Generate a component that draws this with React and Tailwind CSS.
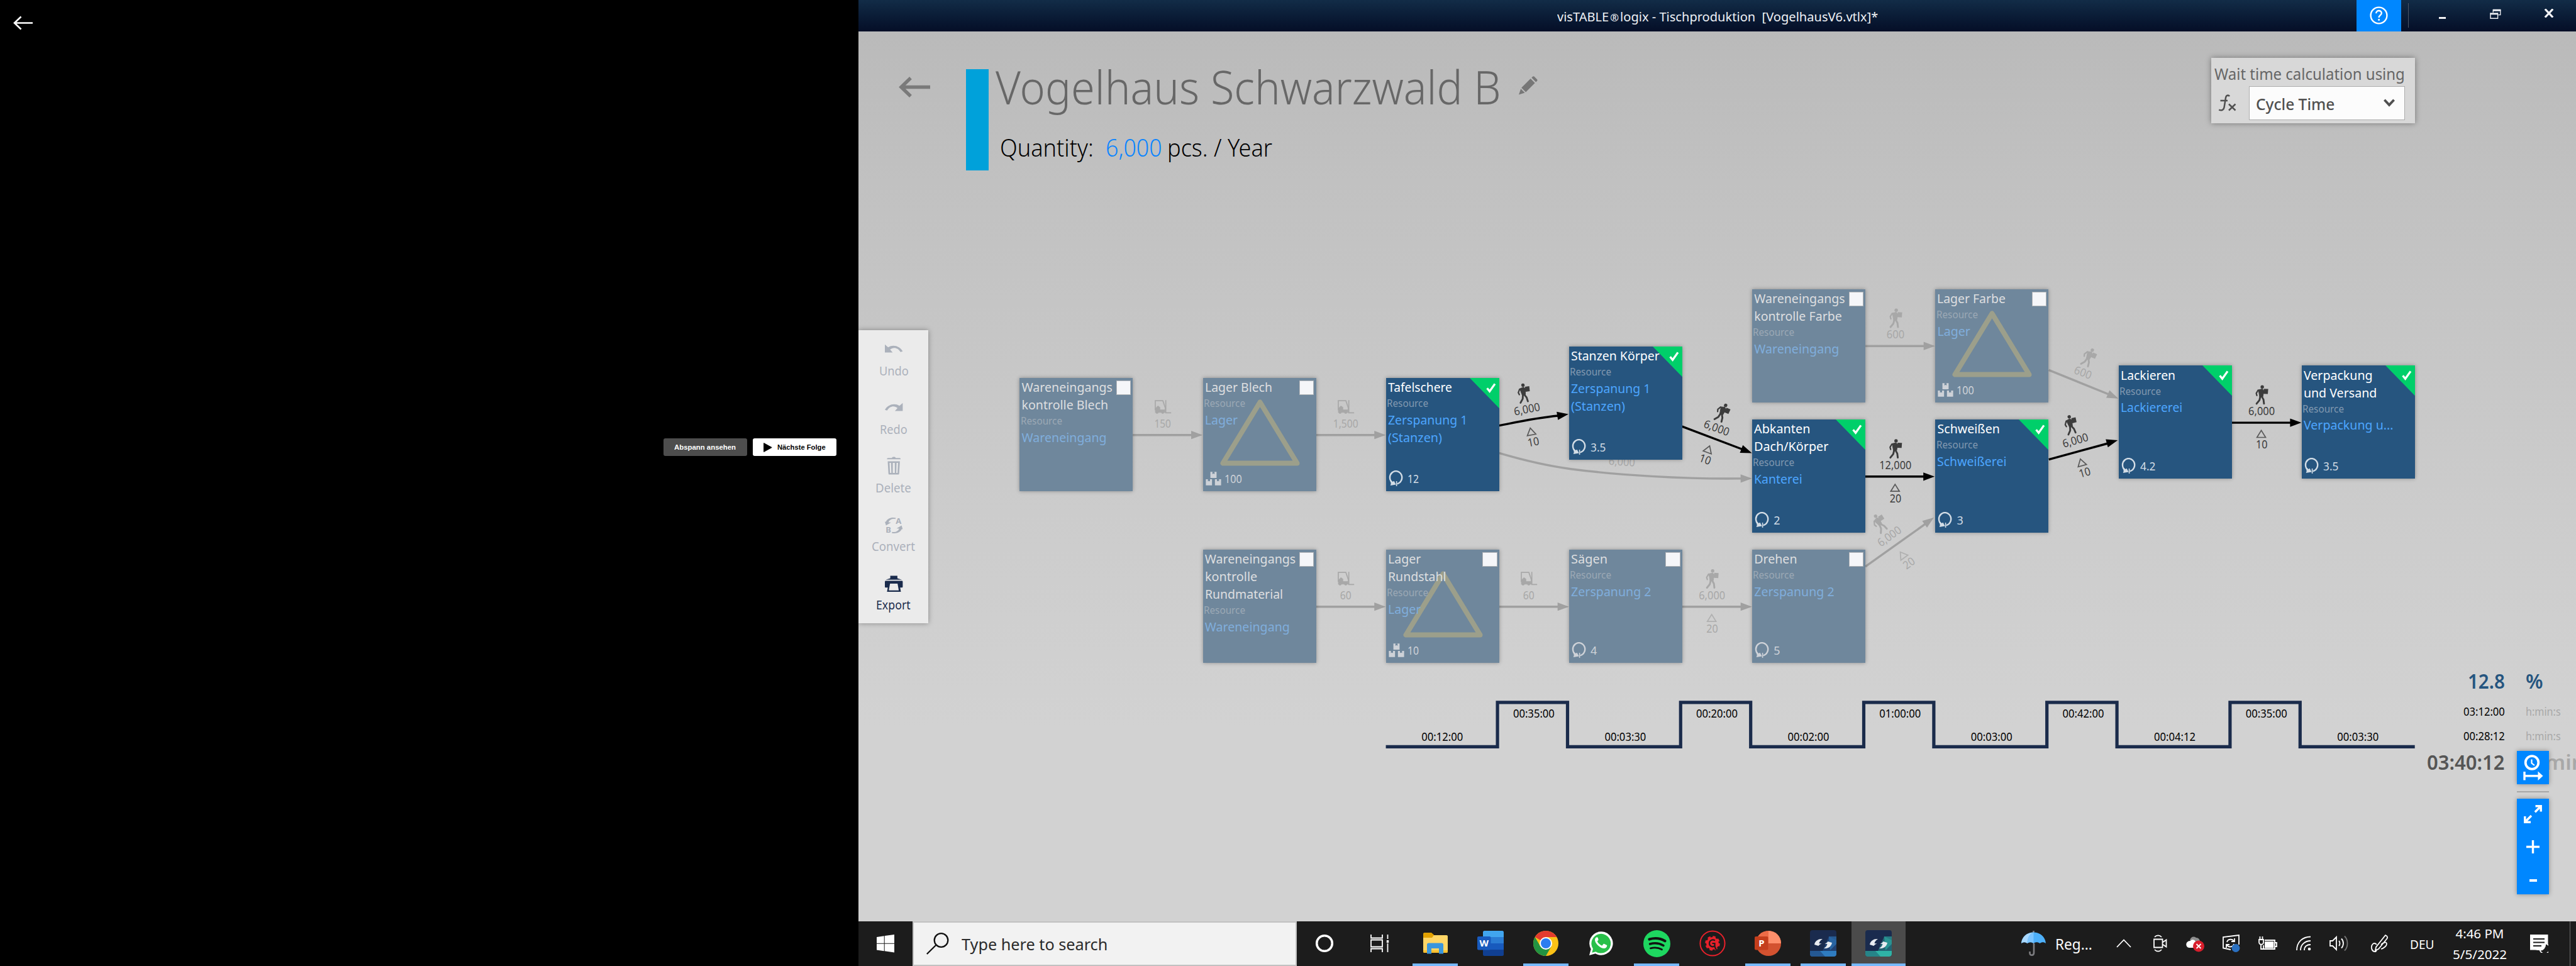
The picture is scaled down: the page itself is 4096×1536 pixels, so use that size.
import React, { useLayoutEffect, useRef, useState } from "react";

/* Text set to a fixed advance width, whatever the metrics of the face. */
function Fit({ w, className = "", children }) {
  const ref = useRef(null);
  const [k, setK] = useState(1);
  useLayoutEffect(() => {
    const natural = ref.current.offsetWidth;
    if (natural > 0) setK(w / natural);
  }, [w]);
  return (
    <span className={"inline-block shrink-0 " + className} style={{ width: w }}>
      <span ref={ref} className="inline-block origin-left whitespace-pre" style={{ transform: `scaleX(${k})` }}>
        {children}
      </span>
    </span>
  );
}

/* ---------- left screen ---------- */

function PlayerScreen() {
  return (
    <section className="relative flex w-[1365.3px] shrink-0 flex-col bg-black font-['Liberation_Sans',sans-serif]">
      <svg className="ml-[21px] mt-[25px] h-[23px] w-[31px]" viewBox="0 0 31 23" fill="none" stroke="#fff" strokeWidth="2.6">
        <path d="M31 11.5H2M12.5 1.5 2 11.5l10.5 10" />
      </svg>
      <div className="mr-[35.5px] mt-[648.9px] flex justify-end gap-[9.2px] text-[11.5px] font-bold leading-[28.4px]">
        <button className="flex h-[28.4px] w-[132.3px] items-center justify-center rounded-[3px] bg-[#4d4d4d] text-white">
          <Fit w={98}>Abspann ansehen</Fit>
        </button>
        <button className="flex h-[28.4px] w-[133px] items-center rounded-[3px] bg-white pl-[17px] text-black">
          <svg className="h-[15px] w-[14px]" viewBox="0 0 14 15">
            <path d="M.6.6 13.2 7.5.6 14.4z" stroke="#000" strokeLinejoin="round" />
          </svg>
          <Fit w={77} className="ml-[8px]">Nächste Folge</Fit>
        </button>
      </div>
    </section>
  );
}

/* ---------- title bar ---------- */

function TitleBar() {
  return (
    <header className="grid h-[49.8px] shrink-0 grid-cols-[1fr_auto_1fr] items-center bg-gradient-to-b from-[#122c47] to-[#050e27]">
      <span />
      <Fit w={510} className="pt-[2px] text-[20.5px] text-[#eef1f5]">
        visTABLE<span className="mx-[2px] text-[17px]">®</span>{"logix - Tischproduktion  [VogelhausV6.vtlx]*"}
      </Fit>
      <div className="flex h-full items-center justify-self-end">
        <div className="flex h-full w-[70.7px] items-center justify-center bg-[#0087ff]">
          <svg className="h-[29px] w-[29px]" viewBox="0 0 29 29" fill="none" stroke="#fff">
            <circle cx="14.5" cy="14.5" r="12.9" strokeWidth="2.4" />
            <path d="M10.2 11.2c0-5.6 8.6-5.4 8.6-.4 0 3.3-4.2 3.4-4.2 7.2" strokeWidth="2.4" />
            <path d="M14.6 20v2.8" strokeWidth="2.6" />
          </svg>
        </div>
        <span className="ml-[11px] mr-[11px] h-[39px] w-px bg-[#4c5667]" />
        <span className="flex w-[85.1px] justify-center pt-[7px]">
          <span className="h-[3px] w-[11px] bg-[#f2f3f6]" />
        </span>
        <span className="flex w-[85.1px] justify-center pb-[6px]">
          <svg className="h-[16px] w-[18px]" viewBox="0 0 18 16" fill="none" stroke="#f2f3f6">
            <path d="M5 1.5h12.3M5 3h12.3" strokeWidth="1.6" />
            <path d="M5.2 1v5M16.8 1v8.6h-3.4" strokeWidth="1.3" />
            <path d="M.8 7.2h12M.8 8.4h12" strokeWidth="1.6" />
            <path d="M1 6.6v8.6h11.6V6.6" strokeWidth="1.4" />
          </svg>
        </span>
        <span className="flex w-[85.1px] justify-center pb-[7px]">
          <svg className="h-[14px] w-[16px]" viewBox="0 0 16 14" stroke="#f2f3f6" strokeWidth="3.2">
            <path d="M1.8.4 14.2 13.6M14.2.4 1.8 13.6" />
          </svg>
        </span>
      </div>
    </header>
  );
}

/* ---------- page head ---------- */

function PageHead() {
  return (
    <div className="flex h-[474.9px] shrink-0 items-start justify-between">
      <div className="flex items-start">
        <svg className="ml-[64px] mt-[72.6px] h-[33px] w-[50px]" viewBox="0 0 50 33" fill="none" stroke="#7a7a7a" strokeWidth="5.4">
          <path d="M50 16.5H5M19 2 4 16.5 19 31" />
        </svg>
        <div className="ml-[57px] mt-[60.4px] h-[160.7px] w-[35.5px] bg-[#00a1da]" />
        <div className="ml-[11px] mt-[48px] flex flex-col">
          <div className="flex items-start">
            <Fit w={804} className="text-[73.5px] font-light leading-[80px] text-[#676767]">Vogelhaus Schwarzwald B</Fit>
            <svg className="ml-[28px] mt-[23px] h-[30px] w-[30px]" viewBox="0 0 30 30" fill="#777">
              <path d="M4.2 18.6 18.7 4.1l6.9 6.9L11.1 25.5z M20.3 2.6l1.8-1.8c.7-.7 1.8-.7 2.5 0l4.4 4.4c.7.7.7 1.8 0 2.5l-1.8 1.8z M3.2 20.2l6.3 6.3L0 29.6z" />
            </svg>
          </div>
          <div className="ml-[7px] mt-[31.3px] flex text-[38.5px] font-light leading-[50px] text-black">
            <Fit w={149}>Quantity:</Fit>
            <Fit w={90} className="ml-[19px] text-[#0a84ff]">6,000</Fit>
            <Fit w={167} className="ml-[8px]">pcs. / Year</Fit>
          </div>
        </div>
      </div>
      <div className="mr-[256.2px] mt-[42.6px] flex h-[104px] w-[324px] flex-col bg-[#d8d8d8] shadow-[0_0_9px_rgba(0,0,0,0.38)]">
        <Fit w={303} className="ml-[5px] mt-[6.5px] text-[25px] leading-[36px] text-[#666]">Wait time calculation using</Fit>
        <div className="mt-[2.3px] flex items-center">
          <div className="flex w-[60px] items-center pl-[11px]">
            <svg className="h-[27px] w-[29px]" viewBox="0 0 29 27" fill="none" stroke="#505050" strokeWidth="2.5">
              <path d="M18 3.2C16.5.8 12.8.9 12 5.5L9.6 20.5C9 24.8 5.6 26.2 1.2 24.6M3.5 10h11.5M17 15.5l10.5 10M27.5 15.5l-10.5 10" />
            </svg>
          </div>
          <div className="flex h-[53.4px] w-[248px] items-center justify-between border-[1.5px] border-[#adadad] bg-[#fcfcfc] pl-[10px] pr-[15px]">
            <Fit w={125} className="pt-[2px] text-[25.5px] font-medium text-[#505050]">Cycle Time</Fit>
            <svg className="h-[13px] w-[18px]" viewBox="0 0 18 13" fill="none" stroke="#505050" strokeWidth="3.8">
              <path d="M1.4 1.8 9 9.9l7.600-8.100" />
            </svg>
          </div>
        </div>
      </div>
    </div>
  );
}

/* ---------- tool bar on the left edge ---------- */

const TOOLS = [
  { label: "Undo", w: 46.5, icon: <path d="M0 6.8v12.700h12.400L8.300 14.800c5-4.300 12.500-3.200 16.500 4l3.500-1C24.500 9.500 13 6 5.200 11.300z" /> },
  { label: "Redo", w: 43.5, icon: <path d="M28.400 6.800v12.700H16l4.100-4.700c-5-4.300-12.500-3.200-16.500 4L.1 17.800C3.900 9.500 15.400 6 23.200 11.300z" /> },
  {
    label: "Delete",
    w: 57,
    icon: (
      <>
        <path d="M11.500 1.200c0-1.300 5.400-1.300 5.400 0v.8h6.600c1 0 1.600.8 1.600 2H3.300c0-1.200.6-2 1.600-2h6.600z" transform="translate(0 -.8)" />
        <path fillRule="evenodd" d="M4.500 6.500h19.400L22.700 26c-.1 1-.6 1.500-1.500 1.500h-14c-.9 0-1.400-.5-1.500-1.500zM7.400 9l.8 16h2.100L9.800 9zM12.600 9v16h3.200V9zM18.600 9l-.5 16h2.100L21 9z" />
      </>
    ),
  },
  {
    label: "Convert",
    w: 69,
    icon: (
      <>
        <path d="M0 8.500l1.500.2C4.200 3.200 10.500.8 17.500 2.500l-.8 1.800C11.800 3.200 7.500 5 5.600 9.500l4.200.3L1.800 14.600z" />
        <path d="M28.400 20.500l-1.500-.2c-2.700 5.500-9 7.900-16 6.200l.8-1.800c4.900 1.100 9.200-.7 11.100-5.200l-4.200-.3 8-4.800z" />
        <text x="17.2" y="12" fontSize="13" fontWeight="700">A</text>
        <text x="1.2" y="26.4" fontSize="13" fontWeight="700">B</text>
      </>
    ),
  },
  {
    label: "Export",
    w: 55,
    on: true,
    icon: (
      <>
        <path d="M8.600 1.500h11.300v4l7.200 2.300H1.400l7.200-2.300z" />
        <path fillRule="evenodd" d="M1.500 9.600h25.400c1 0 1.500.6 1.500 1.500v7.800c0 .9-.5 1.400-1.500 1.400h-2.600l1.200 6.700H3.400l1.200-6.700H1.500c-1 0-1.500-.5-1.500-1.400v-7.800c0-.9.5-1.500 1.500-1.500zM8.200 14 6.300 24.800h15.800L20.200 14z" />
      </>
    ),
  },
];

function ToolBar() {
  return (
    <nav className="flex h-[466px] w-[111px] shrink-0 flex-col bg-[#ebebeb] shadow-[0_0_8px_rgba(0,0,0,0.35)]">
      {TOOLS.map((t) => (
        <div key={t.label} className={"flex h-[93.2px] flex-col items-center " + (t.on ? "text-[#1a2b4c]" : "text-[#abb1bb]")}>
          <svg className="mt-[16.3px] h-[28.4px] w-[28.4px] shrink-0 overflow-visible" viewBox="0 0 28.4 28.4" fill="currentColor">{t.icon}</svg>
          <Fit w={t.w} className="mt-[7.3px] text-[20px] leading-[26px]">{t.label}</Fit>
        </div>
      ))}
    </nav>
  );
}

/* ---------- process nodes ---------- */

const COLS = [256.2, 547.4, 838.6, 1129.8, 1420.9, 1712.2, 2003.4, 2294.6];

const NODES = [
  { x: COLS[0], y: 551.3, title: [["Wareneingangs", 144], ["kontrolle Blech", 138]], res: [["Wareneingang", 135]] },
  { x: COLS[1], y: 551.3, title: [["Lager Blech", 107]], res: [["Lager", 52]], stock: "100" },
  { x: COLS[2], y: 551.3, title: [["Tafelschere", 102]], res: [["Zerspanung 1", 126], ["(Stanzen)", 86]], time: "12", on: true },
  { x: COLS[3], y: 501.3, title: [["Stanzen Körper", 141]], res: [["Zerspanung 1", 126], ["(Stanzen)", 86]], time: "3.5", on: true },
  { x: COLS[4], y: 410.3, title: [["Wareneingangs", 144], ["kontrolle Farbe", 140]], res: [["Wareneingang", 135]] },
  { x: COLS[5], y: 410.3, title: [["Lager Farbe", 109]], res: [["Lager", 52]], stock: "100" },
  { x: COLS[4], y: 617.3, title: [["Abkanten", 89], ["Dach/Körper", 118]], res: [["Kanterei", 76.5]], time: "2", on: true },
  { x: COLS[5], y: 617.3, title: [["Schweißen", 99]], res: [["Schweißerei", 110.5]], time: "3", on: true },
  { x: COLS[6], y: 531.4, title: [["Lackieren", 87]], res: [["Lackiererei", 98.5]], time: "4.2", on: true },
  { x: COLS[7], y: 531.4, title: [["Verpackung", 110], ["und Versand", 116]], res: [["Verpackung u...", 143]], time: "3.5", on: true },
  { x: COLS[1], y: 824.3, title: [["Wareneingangs", 144], ["kontrolle", 83], ["Rundmaterial", 124]], res: [["Wareneingang", 135]] },
  { x: COLS[2], y: 824.3, title: [["Lager", 52], ["Rundstahl", 92.5]], res: [["Lager", 52]], stock: "10" },
  { x: COLS[3], y: 824.3, title: [["Sägen", 58]], res: [["Zerspanung 2", 127]], time: "4" },
  { x: COLS[4], y: 824.3, title: [["Drehen", 68]], res: [["Zerspanung 2", 127]], time: "5" },
];

const DIGITS = { 1: 10, 2: 18.5, 3: 28 };

function StockIcon() {
  const box = "h9.8v9.7h-9.8z";
  return (
    <svg className="h-[22px] w-[25px]" viewBox="0 0 25 22" fill="#ced2d8">
      <path d={"M7.6.3" + box + "M.4 12" + box + "M14.8 12" + box} />
      <path fill="#6f879c" d="M10.800.300h3.400v3.600l-1.700-1.100-1.700 1.100zM3.600 12H7v3.600l-1.700-1.100-1.700 1.100zM18 12h3.400v3.600l-1.700-1.100L18 15.600z" />
    </svg>
  );
}

function CycleIcon({ on }) {
  return (
    <svg className={"h-[25px] w-[23px] " + (on ? "text-[#d3dde6]" : "text-[#ced2d8]")} viewBox="0 0 23 25" fill="none" stroke="currentColor">
      <path d="M13.500 21.300A9.600 10.200 0 1 0 6 19.600" strokeWidth="2.400" />
      <path d="M3.200 14.800 6.500 18l2-1.200 3.200 5.700-9 1.500.9-2.500z" fill="currentColor" stroke="none" />
      <path d="M12.600 17v8" strokeWidth="1.600" />
    </svg>
  );
}

function Node({ n }) {
  return (
    <div
      className={
        "absolute flex h-[180px] w-[180px] flex-col items-start overflow-visible shadow-[0_0_6px_rgba(0,0,0,0.32)] " +
        (n.on ? "bg-[#26557f]" : "bg-[#6f879c]")
      }
      style={{ left: n.x, top: n.y }}
    >
      {n.on ? (
        <svg className="absolute right-0 top-0 h-[48.3px] w-[47px]" viewBox="0 0 47 48.3">
          <path d="M0 0h47v48.300z" fill="#00cf6a" />
          <path d="M27.600 16.200l4 5L40 9.400" fill="none" stroke="#fff" strokeWidth="3.300" />
        </svg>
      ) : (
        <span className="absolute right-[3.3px] top-[4.4px] h-[22.4px] w-[23.4px] border-[1.5px] border-[#b3b5b8] bg-[#f5f6f9]" />
      )}
      {n.stock && (
        <svg className="absolute left-[27px] top-[33.5px] h-[106px] w-[127px]" viewBox="0 0 127 106">
          <path d="M63.500 4.500 4.500 101.500h118z" fill="none" stroke="#c9b77a" strokeOpacity="0.500" strokeWidth="8" strokeLinejoin="round" />
        </svg>
      )}
      <div className={"mt-[1.4px] flex flex-col pl-[3px] text-[19.6px] leading-[28px] " + (n.on ? "text-white" : "text-[#dedfe0]")}>
        {n.title.map(([t, w]) => (
          <Fit key={t} w={w}>{t}</Fit>
        ))}
      </div>
      <Fit w={66} className={"ml-[1.3px] text-[16.2px] leading-[23.5px] " + (n.on ? "text-[#8299b0]" : "text-[#9ca9b5]")}>Resource</Fit>
      <div className={"flex flex-col pl-[3px] text-[19.6px] leading-[28px] " + (n.on ? "text-[#4da6ff]" : "text-[#80aedc]")}>
        {n.res.map(([t, w]) => (
          <Fit key={t} w={w}>{t}</Fit>
        ))}
      </div>
      {(n.time || n.stock) && (
        <div className={"absolute bottom-[6.5px] left-[4px] flex items-center text-[18px] leading-[28px] " + (n.on ? "text-[#d3dde6]" : "text-[#ced2d8]")}>
          <span className="flex w-[30px] shrink-0">{n.stock ? <StockIcon /> : <CycleIcon on={n.on} />}</span>
          <Fit w={n.time && n.time.includes(".") ? 24 : DIGITS[(n.time || n.stock).length]}>{n.time || n.stock}</Fit>
        </div>
      )}
    </div>
  );
}

/* ---------- edges, in window coordinates ---------- */

const EDGES = [
  { d: "M1801.5 691.5H1896", tip: [1912.4, 691.5, 0] },
  { d: "M2092.5 691.5H2187", tip: [2203.6, 691.5, 0] },
  { d: "M2092.5 964.5H2187", tip: [2203.6, 964.5, 0] },
  { d: "M2384 964.5H2478", tip: [2495, 964.5, 0] },
  { d: "M2675 964.5H2769", tip: [2786, 964.5, 0] },
  { d: "M2966.5 550H3060", tip: [3077, 550, 0] },
  { d: "M2384 720.2C2424 732 2468 741.5 2498 745.5C2570 755 2680 762 2770 760.7", tip: [2786, 760.6, -0.5] },
  { d: "M3258 588.2L3354 627", tip: [3368.5, 633.5, 23.5] },
  { d: "M2966.4 900.6L3063 832", tip: [3075.2, 822.9, -35.5] },
  { on: true, d: "M2384 676.5C2410 671.5 2440 664.5 2478 660.8", tip: [2494.3, 658.3, -9] },
  { on: true, d: "M2675 677.9L2771 714.3", tip: [2786, 720.2, 21] },
  { on: true, d: "M2966.3 757.6H3060", tip: [3076.5, 757.6, 0] },
  { on: true, d: "M3258 730.5L3352 704.8", tip: [3367.6, 699.8, -15.5] },
  { on: true, d: "M3549 671.9H3643", tip: [3659.7, 671.9, 0] },
];

const LABELS = [
  { x: 1849, y: 691.5, kind: "truck", n: "150", w: 26.5 },
  { x: 2140, y: 691.5, kind: "truck", n: "1,500", w: 40 },
  { x: 2140, y: 964.5, kind: "truck", n: "60", w: 18 },
  { x: 2431, y: 964.5, kind: "truck", n: "60", w: 18 },
  { x: 2722.5, y: 964.5, kind: "man", n: "6,000", w: 42, s: "20" },
  { x: 3014.4, y: 550, kind: "man", n: "600", w: 28.5 },
  { x: 3305.9, y: 609.3, r: 21, kind: "man", n: "600", w: 28.5 },
  { x: 3015.1, y: 867.3, r: -35.8, kind: "man", n: "6,000", w: 42, s: "20" },
  { x: 2578, y: 752, r: 4, n: "6,000", w: 42 },
  { x: 2431.7, y: 668.3, r: -10.9, kind: "man", n: "6,000", w: 42, s: "10", on: true },
  { x: 2723.5, y: 697.4, r: 20.3, kind: "man", n: "6,000", w: 42, s: "10", on: true },
  { x: 3014.1, y: 757.6, kind: "man", n: "12,000", w: 51, s: "20", on: true },
  { x: 3305.3, y: 717.6, r: -16.1, kind: "man", n: "6,000", w: 42, s: "10", on: true },
  { x: 3596.4, y: 671.9, kind: "man", n: "6,000", w: 42, s: "10", on: true },
];

function Man() {
  return (
    <g transform="translate(-10.5 -59.7)" fill="currentColor" stroke="currentColor" strokeLinecap="round" strokeLinejoin="round">
      <circle cx="11.5" cy="2.8" r="2.7" stroke="none" />
      <path d="M5.500 7.500 11.500 6l2.500 3-1.500 9-5 1z" strokeWidth="1" />
      <path d="M5 8 2 13l1 3.500M12 9l3.500 3.500 3-1" fill="none" strokeWidth="2.200" />
      <path d="M14 5.800l7 .400-.600 8-7-.400z" stroke="none" />
      <path d="M8.500 18l-1.500 6-4.500 5.500M10.500 17.500l3 5.500.8 6.500" fill="none" strokeWidth="2.900" />
    </g>
  );
}

function Truck() {
  return (
    <g transform="translate(-13.5 -55.5)" fill="none" stroke="currentColor">
      <path d="M1.800 16V1h12l4 11.500V20" strokeWidth="1.700" />
      <path d="M2 13.500l4-4 3 2v4h7.500v4H2z" fill="currentColor" strokeWidth="1" />
      <path d="M18.500 0v20.200h8.500" strokeWidth="1.700" />
      <circle cx="4.6" cy="19.3" r="2.4" fill="currentColor" stroke="none" />
      <circle cx="13.6" cy="19.3" r="2.4" fill="currentColor" stroke="none" />
    </g>
  );
}

function Label({ l }) {
  return (
    <g transform={`translate(${l.x} ${l.y}) rotate(${l.r || 0})`} className={l.on ? "text-[#3c3c3c]" : "text-[#a8a8a8]"} fill="currentColor" fontSize="17.8">
      {l.kind === "man" && <Man />}
      {l.kind === "truck" && <Truck />}
      <text x={-l.w / 2} y="-12" textLength={l.w} lengthAdjust="spacingAndGlyphs">{l.n}</text>
      {l.s && (
        <>
          <path d="M-.5 12.300 6.400 23.400H-7.400z" fill="none" stroke="currentColor" strokeOpacity="0.8" strokeWidth="1.700" />
          <text x="-9" y="41" textLength="18.5" lengthAdjust="spacingAndGlyphs">{l.s}</text>
        </>
      )}
    </g>
  );
}

function Edge({ e }) {
  const [x, y, a] = e.tip;
  return (
    <g className={e.on ? "text-black" : "text-[#a0a0a0]"}>
      <path d={e.d} fill="none" stroke="currentColor" strokeWidth="3.4" />
      <path d="M0 0-18-6.600V6.600z" fill="currentColor" transform={`translate(${x} ${y}) rotate(${a})`} />
    </g>
  );
}

const HIGH = ["00:35:00", "00:20:00", "01:00:00", "00:42:00", "00:35:00"];
const LOW = ["00:12:00", "00:03:30", "00:02:00", "00:03:00", "00:04:12", "00:03:30"];

function TimeLine() {
  let d = "M2203.9 1187.2";
  HIGH.forEach((_, i) => {
    const up = 2381.4 + i * 291.2;
    d += `H${up}V1116.7H${up + 111.4}V1187.2`;
  });
  d += "H3840";
  return (
    <g>
      <path d={d} fill="none" stroke="#1a2b4b" strokeWidth="5.2" />
      <g fontSize="17.6" fill="#000">
        {LOW.map((t, i) => (
          <text key={i} x={2260.5 + i * 291.2} y="1177.6" textLength="66" lengthAdjust="spacingAndGlyphs">{t}</text>
        ))}
        {HIGH.map((t, i) => (
          <text key={i} x={2406.2 + i * 291.2} y="1141.3" textLength="66" lengthAdjust="spacingAndGlyphs">{t}</text>
        ))}
      </g>
    </g>
  );
}

function Canvas() {
  return (
    <div className="pointer-events-none absolute inset-0">
      <svg className="absolute inset-0 h-full w-full" viewBox="1365.33 49.8 2730.67 1415.1" preserveAspectRatio="none">
        {EDGES.map((e, i) => (
          <Edge key={i} e={e} />
        ))}
        {LABELS.map((l, i) => (
          <Label key={i} l={l} />
        ))}
        <TimeLine />
      </svg>
      {NODES.map((n, i) => (
        <Node key={i} n={n} />
      ))}
    </div>
  );
}

/* ---------- totals and zoom buttons ---------- */

function Totals() {
  return (
    <div className="flex w-[237.4px] flex-col overflow-hidden pt-[538.6px]">
      <div className="flex text-[31.5px] font-semibold leading-[40px] text-[#25557f]">
        <span className="flex w-[124.5px] justify-end"><Fit w={59}>12.8</Fit></span>
        <Fit w={28} className="ml-[33px]">%</Fit>
      </div>
      {["03:12:00", "00:28:12"].map((t, i) => (
        <div key={t} className={"flex text-[17.6px] leading-[39px] " + (i ? "" : "mt-[8.7px]")}>
          <span className="flex w-[124.5px] justify-end text-black"><Fit w={66}>{t}</Fit></span>
          <Fit w={56} className="ml-[33px] text-[#a8a8a8]">h:min:s</Fit>
        </div>
      ))}
      <div className="mt-[1.9px] flex text-[31.5px] font-semibold leading-[40px] text-[#555]">
        <span className="flex w-[124.5px] justify-end"><Fit w={124}>03:40:12</Fit></span>
        <Fit w={120} className="ml-[33px] text-[#a8a8a8]">h:min:s</Fit>
      </div>
    </div>
  );
}

function ZoomButtons() {
  return (
    <div className="absolute left-[2637px] top-[1144.1px] flex w-[51.2px] flex-col">
      <button className="flex h-[53.3px] items-center justify-center bg-[#0087ff] shadow-[0_0_7px_rgba(0,0,0,0.35)]">
        <svg className="h-[41px] w-[32px]" viewBox="0 0 32 41" fill="none" stroke="#fff">
          <circle cx="14" cy="12.5" r="10.3" strokeWidth="3.8" />
          <path d="M13.500 7.500v6l4.500 3.500" strokeWidth="2.200" />
          <path d="M2 27v13.500M2 33.700h22" strokeWidth="3.400" />
          <path d="M23.500 26.500 31.500 33.700l-8 7.200z" fill="#fff" stroke="none" />
        </svg>
      </button>
      <span className="mt-[10.8px] h-[1.6px] bg-[#a6a6a6]" />
      <div className="mt-[10.4px] flex h-[152.1px] flex-col items-center bg-[#0087ff] shadow-[0_0_7px_rgba(0,0,0,0.35)]">
        <svg className="mt-[10.5px] h-[29px] w-[29px]" viewBox="0 0 29 29" fill="none" stroke="#fff" strokeWidth="3.4">
          <path d="M18.500 1.800h8.700v8.700M26.800 2.200l-9 9M1.800 18v9.200h9.200M2.200 26.800l9.800-9.800" />
        </svg>
        <svg className="mt-[26.5px] h-[21px] w-[21px]" viewBox="0 0 21 21" stroke="#fff" strokeWidth="3.4">
          <path d="M10.500 0v21M0 10.500h21" />
        </svg>
        <span className="mt-[41px] h-[3.6px] w-[12px] bg-white" />
      </div>
    </div>
  );
}

/* ---------- task bar ---------- */

function TaskApp({ children, line, className = "" }) {
  return (
    <div className="flex h-full w-[88.1px] shrink-0 justify-center">
      <div className={"relative flex h-full items-center justify-center " + (className || "w-[72px]")}>
        {children}
        {line && <span className="absolute inset-x-0 bottom-0 h-[4px] bg-[#76b9ff]" />}
      </div>
    </div>
  );
}

function VisIcon({ low, mid }) {
  return (
    <svg className="h-[42px] w-[42px]" viewBox="0 0 42 42">
      <rect width="42" height="42" rx="4" fill="#1a2b4e" />
      <path d="M30 10 42 16v19L30 42H4c-2 0-4-1.500-4-4v-5h20z" fill={low} />
      <path d="M30 10h12v12L32 32z" fill={mid} opacity="0.6" />
      <path d="M0 33h42v5c0 2.500-2 4-4 4H4c-2 0-4-1.500-4-4z" fill={mid} />
      <path d="M0 33h16l8 9H4c-2 0-4-1.500-4-4z" fill={low} opacity="0.6" />
      <path d="M7 23c1-6 6-9.500 13-9-3 2-5 4-5.500 7l4 .5c-3 1-4 2-5 3.500-2.500-.5-4-1.500-6.500-2z" fill="#e9ecf1" />
      <path d="M35 20c-1 6-6 9.500-13 9 3-2 5-4 5.500-7l-4-.5c3-1 4-2 5-3.500 2.500.500 4 1.500 6.500 2z" fill="#e9ecf1" />
    </svg>
  );
}

function TaskApps() {
  return (
    <div className="flex h-full">
      <TaskApp>
        <svg className="h-[30px] w-[30px]" viewBox="0 0 30 30"><circle cx="15" cy="15" r="12.3" fill="none" stroke="#fff" strokeWidth="3.6" /></svg>
      </TaskApp>
      <TaskApp>
        <svg className="h-[28px] w-[30px]" viewBox="0 0 30 28" fill="none" stroke="#fff" strokeWidth="1.8">
          <path d="M1 0v5.500h18V0M1 28v-5.500h18V28M1 8.500h18v11H1zM27.500 0v7M27.500 14v14" />
          <path d="M25.800 9h3.400v4h-3.400z" fill="#fff" stroke="none" />
        </svg>
      </TaskApp>
      <TaskApp line>
        <svg className="h-[34px] w-[39px]" viewBox="0 0 39 34">
          <path d="M0 2C0 .8.800 0 2 0h11l4 3.500V9H0z" fill="#e2a100" />
          <path d="M0 8h14l3-4h20c1.200 0 2 .800 2 2v24c0 1.200-.800 2-2 2H2c-1.200 0-2-.800-2-2z" fill="#ffd666" />
          <path d="M0 28h39v2c0 1.200-.800 2-2 2H2c-1.200 0-2-.800-2-2z" fill="#fdc02f" />
          <path d="M6 19c0-1.500 1-2.500 2.500-2.500h21c1.500 0 2.500 1 2.500 2.500v14.500h-7V25H13v8.500H6z" fill="#3a96dd" />
        </svg>
        <span className="absolute bottom-0 right-0 h-[4px] w-[16px] bg-[#5a8fca]" />
      </TaskApp>
      <TaskApp>
        <svg className="h-[40px] w-[42px]" viewBox="0 0 42 40">
          <rect x="9" width="33" height="40" rx="2.5" fill="#103f91" />
          <path d="M9 20h33v10H9z" fill="#185abd" />
          <path d="M9 10h33v10H9z" fill="#2b7cd3" />
          <path d="M11.500 0h28C41 0 42 1 42 2.500V10H9V2.500C9 1 10 0 11.500 0z" fill="#41a5ee" />
          <rect y="9" width="21.5" height="21.5" rx="2" fill="#185abd" />
          <text x="10.8" y="25.3" fontSize="15" fontWeight="700" fill="#fff" textAnchor="middle">W</text>
        </svg>
      </TaskApp>
      <TaskApp line>
        <svg className="h-[40px] w-[40px]" viewBox="0 0 40 40">
          <circle cx="20" cy="20" r="20" fill="#fbc116" />
          <path d="M20 20 2.700 10A20 20 0 0 1 37.300 10H20z" fill="#e33b2e" />
          <path d="M2.700 10A20 20 0 0 0 20 40l8.600-15L20 20 11.400 25z" fill="#229342" />
          <circle cx="20" cy="20" r="10" fill="#fff" />
          <circle cx="20" cy="20" r="8" fill="#2b7df0" />
        </svg>
      </TaskApp>
      <TaskApp>
        <svg className="h-[38px] w-[38px]" viewBox="0 0 38 38">
          <path d="M0 38l2.700-9.700A18.700 18.700 0 1 1 9.800 35.300z" fill="#fff" />
          <path d="M4.300 33.800l1.700-6a15.400 15.400 0 1 1 4.500 4.400z" fill="#29c04a" />
          <path d="M13.800 10.200c-.4-1-.8-1-1.300-1-2 0-3.500 2-3.500 4.500 0 3 2.500 6.200 5.200 8.900 3.300 3.100 6.600 4.500 9.400 4.500 2.400 0 4.500-1.600 4.700-4.500 0-.4-.1-.6-.6-.8l-4-2c-.5-.2-.8-.1-1.200.3l-1.700 2.100c-.3.4-.6.400-1.100.2-3-1.300-5.300-3.500-6.700-6.200-.2-.5-.1-.7.2-1 1.500-1.600 1.500-1.900 1.200-2.600z" fill="#fff" />
        </svg>
      </TaskApp>
      <TaskApp line>
        <svg className="h-[43px] w-[43px]" viewBox="0 0 43 43" fill="none" stroke="#111" strokeLinecap="round">
          <circle cx="21.5" cy="21.5" r="21.5" fill="#1ed760" stroke="none" />
          <path d="M9.500 14.500c8.500-2.500 17.500-1.700 25 2.700" strokeWidth="4.200" />
          <path d="M10.500 22c7.500-2.200 15-1.400 21.500 2.400" strokeWidth="3.500" />
          <path d="M11.500 28.800c6.500-1.700 12.500-1.200 18 2" strokeWidth="2.800" />
        </svg>
      </TaskApp>
      <TaskApp>
        <svg className="h-[42px] w-[42px]" viewBox="0 0 42 42" fill="none" stroke="#e8212b">
          <circle cx="21" cy="21" r="19.6" strokeWidth="2" />
          <circle cx="21" cy="21" r="10" fill="#e8212b" strokeWidth="3.6" strokeDasharray="4.4 3.45" />
          <path d="M25 16.500c-4.500-2.500-9 0-9 4.500s5 7 8.500 4V21h-4" stroke="#1c1c1c" strokeWidth="2.200" />
          <path d="M24 25l3 6.500" stroke="#1c1c1c" strokeWidth="2.200" />
        </svg>
      </TaskApp>
      <TaskApp line>
        <svg className="h-[40px] w-[42px]" viewBox="0 0 42 40">
          <circle cx="22" cy="20" r="20" fill="#d35230" />
          <path d="M22 0a20 20 0 0 1 20 20H22z" fill="#ff8f6b" />
          <path d="M22 0v20H2A20 20 0 0 1 22 0z" fill="#ed6c47" />
          <rect y="9" width="21.5" height="21.5" rx="2" fill="#c43e1c" />
          <text x="10.8" y="25.3" fontSize="15" fontWeight="700" fill="#fff" textAnchor="middle">P</text>
        </svg>
      </TaskApp>
      <TaskApp line><VisIcon low="#1f4173" mid="#2f7cc0" /></TaskApp>
      <TaskApp line className="w-[86px] bg-[#4b4b4b]"><VisIcon low="#226474" mid="#2fb3a6" /></TaskApp>
    </div>
  );
}

function Cell({ left, w, children }) {
  return (
    <span className="flex shrink-0 items-center" style={{ marginLeft: left, width: w }}>
      {children}
    </span>
  );
}

function Tray() {
  const line = { fill: "none", stroke: "#fff", strokeWidth: 1.8 };
  return (
    <div className="ml-[183px] flex h-full flex-1 items-center text-white">
      <Cell w={39} left={0}>
        <svg className="h-[41px] w-[39px]" viewBox="0 0 39 41">
          <path d="M19.500 0v5M20 20v15c0 5-6.500 5-6.500.5V33" fill="none" stroke="#7d7d80" strokeWidth="2.600" />
          <path d="M0 20C1 9 9 2.500 19.500 2.500S38 9 39 20c-3-2.300-6.500-2.300-9.500 0-3-2.300-7-2.300-10 0-3-2.300-7-2.300-10 0-3-2.300-6.500-2.300-9.500 0z" fill="#4eb0f9" />
          <path d="M9.500 20C10 11 13 5 19.500 2.500 9 3 1 9 0 20c3-2.300 6.500-2.300 9.500 0z" fill="#a9d8ff" />
          <path d="M19.500 2.500V20c-3-2.300-7-2.300-10 0 0-8 4-15 10-17.500z" fill="#7cc4ff" />
        </svg>
      </Cell>
      <Fit w={59} className="ml-[15px] pt-[2px] text-[23px]">Reg...</Fit>
      <Cell w={24} left={38}>
        <svg className="h-[14px] w-[24px]" viewBox="0 0 24 14" {...line}><path d="M1 13 12 1.500 23 13" /></svg>
      </Cell>
      <Cell w={22} left={35}>
        <svg className="h-[28px] w-[22px]" viewBox="0 0 22 28" {...line}>
          <path d="M1 7.500h13.500v13H1zM14.500 12.500l6-4v11l-6-4M2 4c3-3.500 8-3.500 11 0M2 24c3 3.500 8 3.500 11 0" />
        </svg>
      </Cell>
      <Cell w={29} left={30.5}>
        <svg className="h-[28px] w-[29px]" viewBox="0 0 29 28">
          <path d="M6 9c1-5 6-7 10-4 4 0 6 3 6 7z" fill="#8e8e8e" />
          <path d="M5 21c-7-.5-6-11 1.500-11 3-3 8-2 9 2v9z" fill="#fff" />
          <circle cx="20" cy="18.5" r="9" fill="#d81e2c" />
          <path d="M16.500 15l7 7M23.500 15l-7 7" stroke="#fff" strokeWidth="1.800" />
        </svg>
      </Cell>
      <Cell w={30} left={28}>
        <svg className="h-[29px] w-[30px]" viewBox="0 0 30 29" {...line}>
          <path d="M14 24 2 21.500V4l25-3v15" />
          <path d="M8 12c1-5 9-6 11-1M20 6v5h-5M19 15c-1 5-8 6-11 2M7 21v-5h5" />
          <circle cx="22" cy="21.5" r="6.5" fill="#2b70c0" stroke="none" />
        </svg>
      </Cell>
      <Cell w={31} left={26.5}>
        <svg className="h-[24px] w-[31px]" viewBox="0 0 31 24" {...line}>
          <path d="M11 7h16v14H9v-6M27 11h3v6h-3M5 14v7h4M2 6h7v4c0 5-7 5-7 0zM3.500 1v5M7.500 1v5" />
          <path d="M12 10h12.500v8.500H12z" fill="#fff" />
        </svg>
      </Cell>
      <Cell w={24} left={30.5}>
        <svg className="h-[24px] w-[24px]" viewBox="0 0 24 24" {...line}>
          <path d="M1 23C1 10 10 1.500 23 1.500M7 23c0-9 7-15 16-15M13 23c0-6 4-9 10-9" />
          <circle cx="21" cy="21" r="2.3" fill="#fff" stroke="none" />
        </svg>
      </Cell>
      <Cell w={31} left={28.5}>
        <svg className="h-[26px] w-[31px]" viewBox="0 0 31 26" {...line}>
          <path d="M1 9h4l6-6v20l-6-6H1zM15 9c2 2 2 6 0 8M19 5.500c4 4 4 11 0 15" />
          <path d="M24 1.500c6 6 6 17 0 23" stroke="#777" />
        </svg>
      </Cell>
      <Cell w={29} left={34}>
        <svg className="h-[30px] w-[29px]" viewBox="0 0 29 30" {...line}>
          <path d="M24 2c3 1 4 4 2 6L13 24l-5 2 1-5zM10 17c-4-5-9 0-8 6 1 5 6 7 8 3M17 17c4-4 9-5 9-1 0 3-5 7-9 8" />
        </svg>
      </Cell>
      <Fit w={38.5} className="ml-[34px] pt-[2px] text-[20.3px]">DEU</Fit>
      <div className="ml-[29px] flex w-[87px] flex-col items-center pt-[2px] text-[20.5px] leading-[33.7px]">
        <Fit w={77}>4:46 PM</Fit>
        <Fit w={86.5}>5/5/2022</Fit>
      </div>
      <Cell w={29} left={37}>
        <svg className="h-[29px] w-[29px]" viewBox="0 0 29 29">
          <path d="M0 0h28.500v18l-4 7H13l-5-.500H0z" fill="#fff" />
          <path d="M5 7h18M5 12.500h18M5 18h13" stroke="#1c1c1c" strokeWidth="1.800" />
          <path d="M24.500 14.500a8 8 0 1 1-9 10c5 1 9-4 9-10z" fill="#1c1c1c" stroke="#fff" strokeWidth="1.700" />
        </svg>
      </Cell>
      <span className="ml-auto mr-[9px] h-full w-px bg-[#6b6b6b]" />
    </div>
  );
}

function TaskBar() {
  return (
    <footer className="flex h-[71.1px] shrink-0 bg-[#1c1c1c]">
      <div className="flex w-[85.4px] shrink-0 items-center justify-center">
        <svg className="h-[28.5px] w-[28.5px]" viewBox="0 0 28.5 28.5" fill="#fff">
          <path d="M0 4 11.700 2.300V13.700H0zM12.700 2.100 28.500 0v13.700H12.700zM0 14.800h11.700v11.400L0 24.500zM12.700 14.800h15.800v13.700l-15.800-2.200z" />
        </svg>
      </div>
      <div className="flex w-[611.2px] shrink-0 items-center border-[2px] border-[#c1c1c1] bg-[#f2f2f2] pl-[20px]">
        <svg className="h-[35px] w-[36px]" viewBox="0 0 36 35" fill="none" stroke="#111" strokeWidth="2.3">
          <circle cx="23.5" cy="12" r="10.8" />
          <path d="M15.500 19.500.8 34" />
        </svg>
        <Fit w={232} className="ml-[20px] pt-[3px] text-[26px] text-[#2b2b2b]">Type here to search</Fit>
      </div>
      <TaskApps />
      <Tray />
    </footer>
  );
}

export default function App() {
  return (
    <main className="flex h-[1536px] w-[4096px] overflow-hidden bg-black">
      <PlayerScreen />
      <section className="flex min-w-0 flex-1 flex-col font-['Noto_Sans','Open_Sans',sans-serif]">
        <TitleBar />
        <div className="relative flex min-h-0 flex-1 flex-col overflow-hidden bg-[linear-gradient(180deg,#bababa_0%,#c1c1c1_17%,#c6c6c6_34%,#cccccc_54%,#d2d2d2_78%,#d2d2d2_100%)]">
          <PageHead />
          <div className="flex min-h-0 flex-1 items-start justify-between">
            <ToolBar />
            <Totals />
          </div>
          <Canvas />
          <ZoomButtons />
        </div>
        <TaskBar />
      </section>
    </main>
  );
}
